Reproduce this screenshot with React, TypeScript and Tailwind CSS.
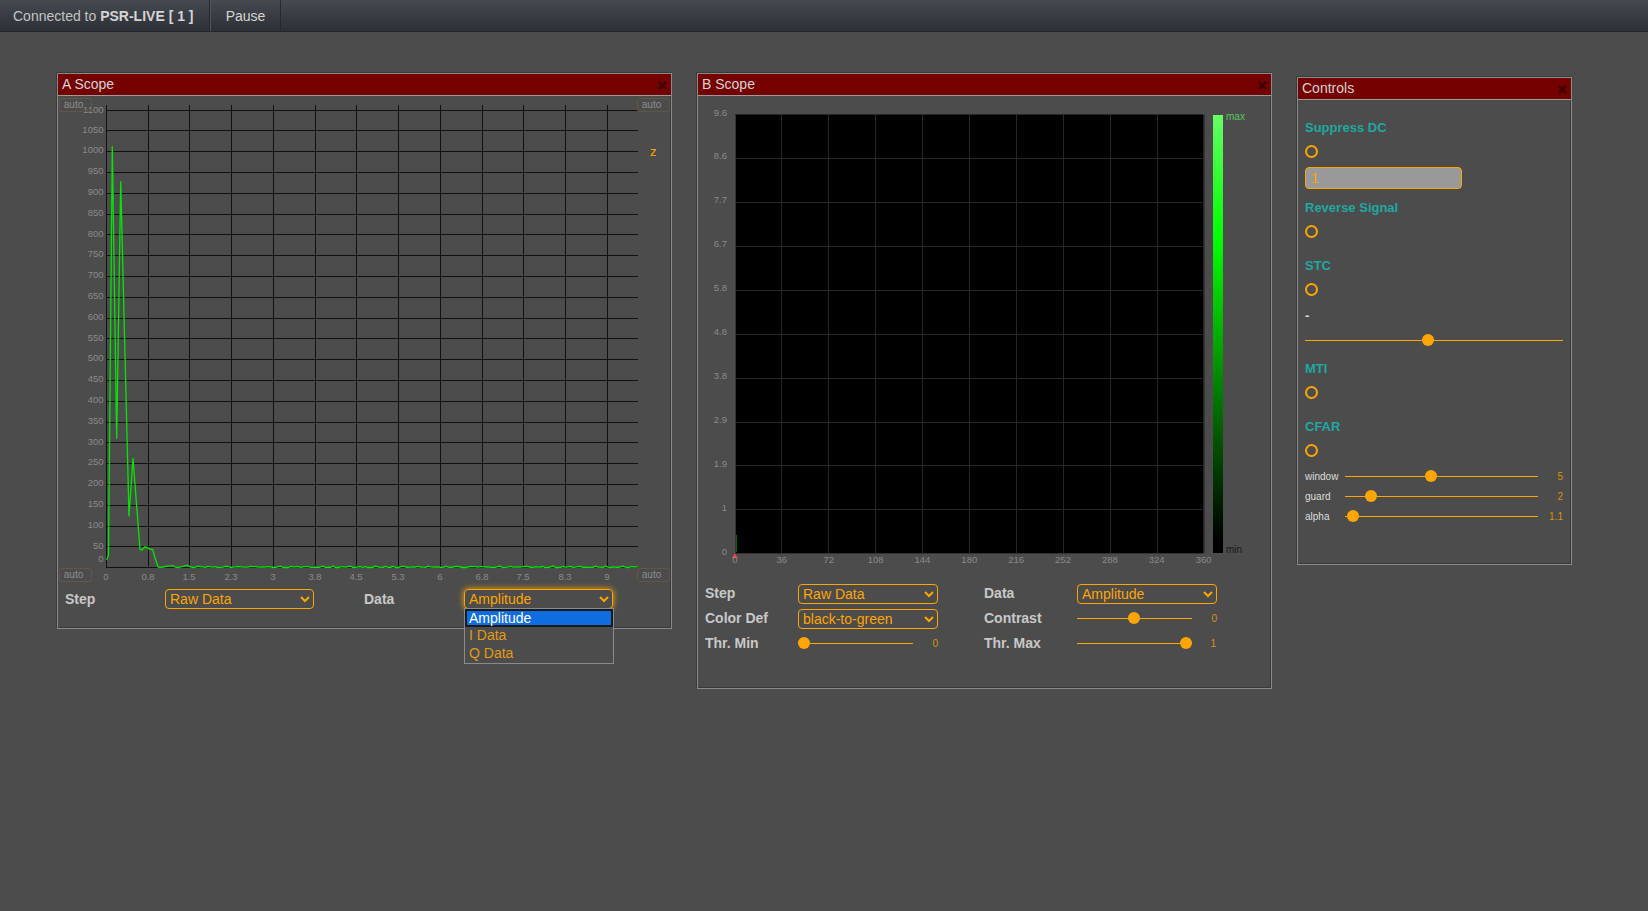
import React from "react";

const aY = ["0","50","100","150","200","250","300","350","400","450","500","550","600","650","700","750","800","850","900","950","1000","1050","1100"];
const aX = ["0","0.8","1.5","2.3","3","3.8","4.5","5.3","6","6.8","7.5","8.3","9"];
const aXGrid = [106,148,189,231,273,315,356,398,440,482,523,565,607];
const bY = ["0","1","1.9","2.9","3.8","4.8","5.8","6.7","7.7","8.6","9.6"];
const bX = ["0","36","72","108","144","180","216","252","288","324","360"];

function noise() {
  const pts: string[] = [];
  for (let x = 158; x <= 638; x += 2.5) {
    const n = Math.sin(x * 0.9) * Math.sin(x * 0.23) * 1.4 + Math.sin(x * 0.07) * 0.4;
    const bump = x > 165 && x < 200 ? Math.max(0, Math.sin((x - 165) * 0.35)) * 1.5 : 0;
    pts.push(`${x},${(567.6 - Math.abs(n) - bump).toFixed(1)}`);
  }
  return pts.join(" ");
}

const trace =
  "106.7,560 108.5,555 112.3,146.7 116.7,438.3 120.7,181.7 129,516 133,458.3 140,549.3 142,550 145,546.7 150,549.3 152.7,549.3 155,558 158,566.5 " +
  noise();

function AChart() {
  return (
    <svg viewBox="58 96 613 491" className="block h-[491px] w-[613px]" style={{ fontFamily: "'Liberation Sans', sans-serif" }}>
      {aY.map((_, i) => {
        const y = Math.floor(567.6 - i * 20.8) + 0.5;
        return <line key={i} x1="106" x2="638" y1={y} y2={y} stroke="#111" strokeWidth="1" />;
      })}
      {aXGrid.map((g) => (
        <line key={g} x1={g + 0.5} x2={g + 0.5} y1="105" y2="568" stroke="#111" strokeWidth="1" />
      ))}
      {aY.map((t, i) => {
        const y = i === 0 ? 561.5 : i === 22 ? 113 : 567.6 - i * 20.8 + 1.8;
        return (
          <text key={t} x="103.5" y={y} textAnchor="end" fontSize="9.5" fill="#8a8a8a">
            {t}
          </text>
        );
      })}
      {aX.map((t, i) => (
        <text key={t} x={aXGrid[i]} y="580" textAnchor="middle" fontSize="9.5" fill="#8a8a8a">
          {t}
        </text>
      ))}
      <polyline points={trace} fill="none" stroke="#00e800" strokeWidth="1.3" strokeLinejoin="round" />
      <text x="650" y="156" fontSize="13" fill="#ffa500">
        z
      </text>
    </svg>
  );
}

function BChart() {
  const top = 115;
  const bottom = 553;
  return (
    <svg viewBox="698 96 573 485" className="block h-[485px] w-[573px]" style={{ fontFamily: "'Liberation Sans', sans-serif" }}>
      <defs>
        <linearGradient id="cbar" x1="0" x2="0" y1="0" y2="1">
          <stop offset="0" stopColor="#66ff66" />
          <stop offset="0.28" stopColor="#00ff00" />
          <stop offset="0.97" stopColor="#000000" />
          <stop offset="1" stopColor="#000000" />
        </linearGradient>
      </defs>
      <rect x="735" y={top} width="468.5" height={bottom - top} fill="#000" />
      {bY.map((_, i) => {
        const y = Math.round(553.2 - 43.875 * i) + 0.5;
        return <line key={i} x1="735" x2="1203.5" y1={y} y2={y} stroke={i === 0 ? "#333333" : "#262626"} strokeWidth="1" />;
      })}
      {bX.map((_, i) => {
        const x = Math.floor(735 + 46.9 * i) + 0.5;
        return <line key={i} x1={x} x2={x} y1={top} y2={bottom} stroke={i === 0 || i === 10 ? "#333333" : "#262626"} strokeWidth="1" />;
      })}
      <line x1="736.5" x2="736.5" y1="535" y2="552" stroke="#006a00" strokeWidth="1" />
      <polygon points="732,558 738,558 735,553.5" fill="#ff4040" />
      {bY.map((t, i) => (
        <text key={t} x="727" y={i === 10 ? 116 : 555 - i * 44} textAnchor="end" fontSize="9.5" fill="#8a8a8a">
          {t}
        </text>
      ))}
      {bX.map((t, i) => (
        <text key={t} x={735 + 46.86 * i} y="563" textAnchor="middle" fontSize="9.5" fill="#8a8a8a">
          {t}
        </text>
      ))}
      <rect x="1213" y={top} width="10" height={bottom - top} fill="url(#cbar)" />
      <text x="1226" y="120" fontSize="10" fill="#5cc45c">
        max
      </text>
      <text x="1226" y="553" fontSize="10" fill="#1a1a1a">
        min
      </text>
    </svg>
  );
}

function Panel({ title, className, children }: { title: string; className: string; children: React.ReactNode }) {
  return (
    <section className={`relative shrink-0 border border-[#8a8a8a] shadow-[inset_-1px_-1px_0_#3a3a3a,-1px_-1px_0_#3a3a3a] ${className}`}>
      <header className="flex h-[22px] items-center justify-between border-b border-[#9a9a9a] bg-[#740000] pl-[4px] pr-[4px] text-[14px] text-[#d4d4d4]">
        <span>{title}</span>
        <svg width="9" height="9" viewBox="0 0 9 9" className="mt-[1px]">
          <path d="M0.8 0.8 L8.2 8.2 M8.2 0.8 L0.8 8.2" stroke="#420000" strokeWidth="2.5" />
        </svg>
      </header>
      {children}
    </section>
  );
}

function Auto({ className }: { className: string }) {
  return (
    <button className={`absolute flex h-[14px] w-[33px] items-center justify-center rounded-[3px] border border-[#615744] pr-[4px] text-[10px] leading-none text-[#8c8c8c] ${className}`}>
      auto
    </button>
  );
}

function Select({ value, options, className = "" }: { value: string; options: string[]; className?: string }) {
  return (
    <select
      defaultValue={value}
      className={`h-[20px] rounded-[4px] border border-[#ffa500] bg-transparent pl-0 text-[14px] leading-none text-[#ffa500] outline-none ${className}`}
    >
      {options.map((o) => (
        <option key={o} value={o} className="bg-[#4c4c4c]">
          {o}
        </option>
      ))}
    </select>
  );
}

function Slider({ pct, className = "" }: { pct: number; className?: string }) {
  return (
    <div className={`relative h-px bg-[#ffa500] ${className}`}>
      <div
        className="absolute top-[-6px] h-[12px] w-[12px] -translate-x-1/2 rounded-full bg-[#ffa500]"
        style={{ left: `${pct}%` }}
      />
    </div>
  );
}

function Radio({ className = "" }: { className?: string }) {
  return <div className={`h-[13px] w-[13px] rounded-full border-2 border-[#ffa500] ${className}`} />;
}

function Heading({ children, className = "" }: { children: React.ReactNode; className?: string }) {
  return <div className={`h-[16px] text-[13px] font-bold leading-[16px] text-[#20a8a0] ${className}`}>{children}</div>;
}

function Mini({ label, value, pct }: { label: string; value: string; pct: number }) {
  return (
    <div className="flex h-[20px] items-center text-[10px]">
      <span className="w-[40px] text-[#dddddd]">{label}</span>
      <Slider pct={pct} className="w-[193px]" />
      <span className="flex-1 text-right text-[#d9900f]">{value}</span>
    </div>
  );
}

const lbl = "text-[14px] font-bold text-[#c8c8c8]";
const val = "text-right text-[10px] text-[#d9900f]";

export default function App() {
  return (
    <div className="min-h-screen bg-[#4c4c4c] font-['Liberation_Sans',Arial,sans-serif]">
      <nav className="flex h-[32px] items-stretch border-b border-[#23262a] bg-gradient-to-b from-[#454a51] to-[#2d3136] text-[14px]">
        <div className="flex w-[210px] items-center border-r border-[#262a2e] pl-[13px] pt-[1px] text-[#c4c4c4]">
          <span>
            Connected to <b className="text-[#d4d4d4]">PSR-LIVE [ 1 ]</b>
          </span>
        </div>
        <div className="flex w-[71px] items-center justify-center border-r border-[#262a2e] border-l border-l-[#50555b] pt-[1px] text-[#d4d4d4]">Pause</div>
      </nav>

      <main className="flex items-start gap-[25px] pl-[57px] pt-[41px]">
        <Panel title="A Scope" className="h-[556px] w-[615px]">
          <AChart />
          <Auto className="left-[1px] top-[24px]" />
          <Auto className="right-[1px] top-[24px]" />
          <Auto className="left-[1px] top-[494px]" />
          <Auto className="right-[1px] top-[494px]" />
          <div className="mt-[2px] flex h-[20px] items-center pl-[7px]">
            <span className={`w-[100px] ${lbl}`}>Step</span>
            <Select value="Raw Data" options={["Raw Data"]} className="w-[149px]" />
            <span className={`ml-[50px] w-[100px] ${lbl}`}>Data</span>
            <Select value="Amplitude" options={["Amplitude", "I Data", "Q Data"]} className="w-[149px] shadow-[0_0_6px_#ffa500]" />
          </div>
          <div className="absolute left-[406px] top-[534px] z-10 h-[56px] w-[150px] border border-[#8a8a8a] bg-[#4c4c4c] text-[14px] leading-[18px] text-[#e39a14]">
            <div className="border-2 border-[#1a1a1a] bg-[#0f6de0] px-[2px] leading-[14px] text-white">Amplitude</div>
            <div className="pl-[4px] leading-[17px]">I Data</div>
            <div className="pl-[4px]">Q Data</div>
          </div>
        </Panel>

        <Panel title="B Scope" className="h-[616px] w-[575px]">
          <BChart />
          <div className="flex flex-col pl-[7px]">
            <div className="flex h-[25px] items-center">
              <span className={`w-[93px] ${lbl}`}>Step</span>
              <Select value="Raw Data" options={["Raw Data"]} className="w-[140px]" />
              <span className={`ml-[46px] w-[93px] ${lbl}`}>Data</span>
              <Select value="Amplitude" options={["Amplitude"]} className="w-[140px]" />
            </div>
            <div className="flex h-[25px] items-center">
              <span className={`w-[93px] ${lbl}`}>Color Def</span>
              <Select value="black-to-green" options={["black-to-green"]} className="w-[140px]" />
              <span className={`ml-[46px] w-[93px] ${lbl}`}>Contrast</span>
              <Slider pct={49.6} className="w-[115px]" />
              <span className={`w-[25px] ${val}`}>0</span>
            </div>
            <div className="flex h-[25px] items-center">
              <span className={`w-[93px] ${lbl}`}>Thr. Min</span>
              <Slider pct={5.2} className="w-[115px]" />
              <span className={`w-[25px] ${val}`}>0</span>
              <span className={`ml-[46px] w-[93px] ${lbl}`}>Thr. Max</span>
              <Slider pct={94.8} className="w-[115px]" />
              <span className={`w-[24px] ${val}`}>1</span>
            </div>
          </div>
        </Panel>

        <Panel title="Controls" className="mt-[4px] h-[488px] w-[275px]">
          <div className="px-[7px] pt-[20px] pr-[8px]">
            <Heading>Suppress DC</Heading>
            <Radio className="mt-[9px]" />
            <div className="mt-[9px] flex h-[22px] w-[157px] items-center rounded-[4px] border border-[#ffa500] bg-[#999999] pl-[5px] text-[14px] text-[#ffa500]">1</div>
            <Heading className="mt-[11px]">Reverse Signal</Heading>
            <Radio className="mt-[9px]" />
            <Heading className="mt-[20px]">STC</Heading>
            <Radio className="mt-[9px]" />
            <div className="mt-[12px] h-[16px] text-[13px] font-bold leading-[16px] text-[#dddddd]">-</div>
            <Slider pct={47.6} className="mt-[16px]" />
            <Heading className="mt-[20px]">MTI</Heading>
            <Radio className="mt-[9px]" />
            <Heading className="mt-[20px]">CFAR</Heading>
            <Radio className="mt-[9px]" />
            <div className="mt-[9px]">
              <Mini label="window" value="5" pct={44.6} />
              <Mini label="guard" value="2" pct={13.3} />
              <Mini label="alpha" value="1.1" pct={4} />
            </div>
          </div>
        </Panel>
      </main>
    </div>
  );
}
